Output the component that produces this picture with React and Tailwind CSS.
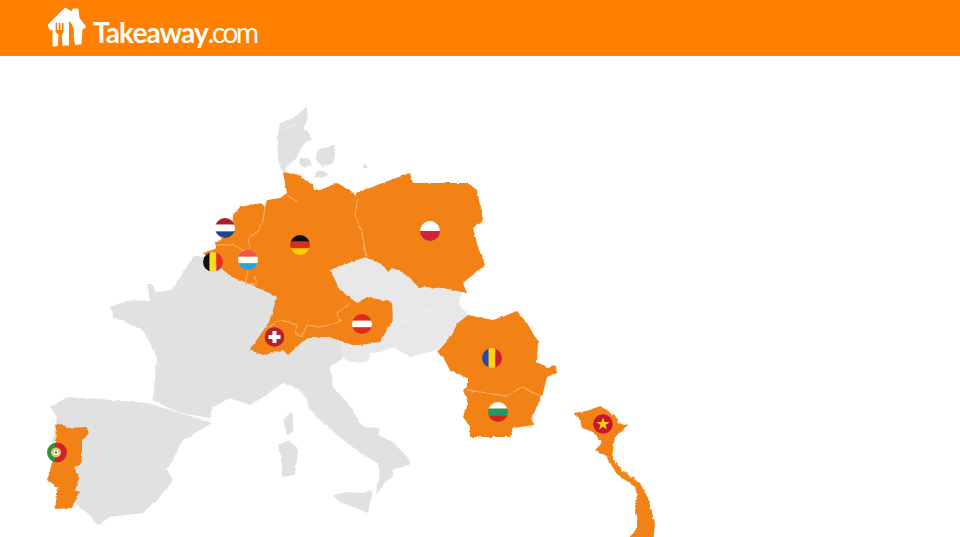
const ORANGE = "#f28118";
const GREY = "#e1e1e1";
const LIGHT = "#e8e8e8";
const LINE = "#f9c48e";

// grey shapes run on under the orange ones so that no seam shows along shared borders
const greyShapes = [
  // denmark
  "307,107 308,120 303,128 310,135 312,139 305,143 300,150 297,158 290,163 283,175 278,160 277,140 280,123 293,118 300,112",
  "300,158 308,158 312,164 305,168 299,164",
  "317,150 325,148 335,145 335,155 333,163 323,167 316,160",
  "315,172 322,170 329,175 322,178 316,177",
  "363,164 368,166 368,169 364,168",
  // france + italy
  "110,307 130,300 150,301 147,284 152,284 156,292 172,290 193,257 203,257 220,255 280,280 300,320 340,320 345,335 347,350 343,358 333,365 330,367 333,387 347,402 363,427 380,428 378,435 393,442 403,452 411,462 409,465 393,470 393,477 385,482 377,494 375,490 380,477 378,463 367,457 353,447 337,435 320,420 310,410 303,392 295,387 283,383 263,397 250,405 230,398 212,407 210,418 180,413 153,400 157,357 143,330 113,317",
  // iberia
  "50,407 67,397 100,399 147,403 180,413 212,423 183,440 167,470 173,480 160,497 143,513 110,517 98,525 87,513 75,503 60,490 50,450 57,417",
  // islands
  "333,495 347,492 363,493 373,490 368,513 353,507 340,502",
  "278,445 290,440 298,450 295,475 282,477 282,460",
  "293,410 293,433 287,435 283,420",
];

const lightShapes = [
  // czechia, slovakia, hungary
  "330,270 345,255 367,250 385,260 402,265 425,280 443,283 463,288 458,303 468,315 448,340 437,350 410,357 393,347 380,335 385,320 385,310 367,305 357,310 335,290",
  // slovenia, croatia
  "338,335 360,335 383,330 393,347 380,352 370,353 368,362 350,362 343,358",
];

const orangeShapes = [
  // nl, be, lu, de, ch, at
  "283,172 300,175 305,180 313,185 314,190 320,190 337,183 350,190 358,198 355,215 362,233 366,257 348,263 330,270 340,290 357,303 367,297 392,302 393,320 387,330 380,342 360,345 353,345 337,340 330,337 312,337 302,342 288,355 283,350 263,355 250,350 249,351 265,328 269,322 277,297 257,287 232,277 223,270 203,253 217,248 215,243 232,233 233,215 240,207 260,203 265,207 267,200 280,198 287,193 285,183",
  // poland
  "356,193 385,182 410,173 413,183 468,183 477,190 483,220 473,228 478,247 485,265 463,283 467,293 443,288 423,287 420,288 402,272 392,268 388,272 383,265 365,257 360,233 353,215 356,198",
  // portugal
  "55,425 63,424 67,428 87,427 89,433 82,440 82,457 80,465 74,467 79,478 75,490 79,492 72,508 55,509 58,487 53,485 47,480 55,453 57,433",
  // romania
  "437,352 448,340 458,323 468,315 493,320 517,311 527,323 538,342 537,362 547,368 556,365 557,373 547,377 542,397 522,387 507,396 467,390 467,378 450,370 443,357",
  // bulgaria
  "463,390 467,387 507,393 522,384 543,394 532,417 534,425 513,428 510,437 470,437 470,427 463,417 468,403",
  // vietnam
  "573,413 580,412 587,411 600,406 615,415 618,423 628,426 615,437 613,450 612,458 623,471 640,483 648,498 655,523 653,545 623,545 638,527 635,512 637,495 635,487 617,474 605,455 595,450 602,443 593,432 582,428 580,420",
];

const borderLines = [
  "358,198 355,215 362,233 366,257",
  "265,207 263,220 258,232 248,238 250,247",
  "217,245 233,245 247,252",
  "287,195 298,202",
  "248,270 245,283 255,285 255,276",
  "265,328 282,320 297,325 295,333 302,337 307,325 320,327 340,322 337,313 350,303",
  "467,390 507,396 522,387 542,397",
];

const paleLines = [
  "397,323 420,315 443,303",
  "150,403 197,418 212,420",
  "157,360 163,373",
  "280,130 296,125",
];

const Flag = ({ id, cx, cy, children }) => (
  <g>
    <clipPath id={id}>
      <circle cx={cx} cy={cy} r="10" />
    </clipPath>
    <g clipPath={`url(#${id})`}>{children}</g>
  </g>
);

const HStripes = ({ cx, cy, colors }) =>
  colors.map((c, i) => (
    <rect key={i} x={cx - 10} y={cy - 10 + (i * 20) / colors.length} width="20" height={20 / colors.length} fill={c} />
  ));

const VStripes = ({ cx, cy, colors }) =>
  colors.map((c, i) => (
    <rect key={i} x={cx - 10 + (i * 20) / colors.length} y={cy - 10} width={20 / colors.length} height="20" fill={c} />
  ));

const MapChart = () => (
  <svg viewBox="0 56 960 481" className="block h-[481px] w-[960px]">
    <filter id="rough" x="0" y="56" width="960" height="481" filterUnits="userSpaceOnUse">
      <feTurbulence type="fractalNoise" baseFrequency="0.2" numOctaves="2" seed="4" />
      <feDisplacementMap in="SourceGraphic" scale="3" xChannelSelector="R" yChannelSelector="G" />
      <feGaussianBlur stdDeviation="0.35" />
    </filter>

    <g filter="url(#rough)">
      {greyShapes.map((p) => (
        <polygon key={p} points={p} fill={GREY} />
      ))}
      {lightShapes.map((p) => (
        <polygon key={p} points={p} fill={LIGHT} />
      ))}
      {orangeShapes.map((p) => (
        <polygon key={p} points={p} fill={ORANGE} />
      ))}
      {borderLines.map((p) => (
        <polyline key={p} points={p} fill="none" stroke={LINE} strokeWidth="0.8" />
      ))}
      {paleLines.map((p) => (
        <polyline key={p} points={p} fill="none" stroke="#f3f3f3" strokeWidth="0.8" />
      ))}
    </g>

    <Flag id="nl" cx={225} cy={228}>
      <HStripes cx={225} cy={228} colors={["#ae1c28", "#ffffff", "#21468b"]} />
    </Flag>
    <Flag id="de" cx={300} cy={245}>
      <HStripes cx={300} cy={245} colors={["#111111", "#dd2c1c", "#ffce00"]} />
    </Flag>
    <Flag id="be" cx={213} cy={262}>
      <VStripes cx={213} cy={262} colors={["#111111", "#fdda24", "#e2302a"]} />
    </Flag>
    <Flag id="lu" cx={248} cy={260}>
      <HStripes cx={248} cy={260} colors={["#f0544c", "#ffffff", "#2aa3dc"]} />
    </Flag>
    <Flag id="pl" cx={430} cy={231}>
      <HStripes cx={430} cy={231} colors={["#ffffff", "#d4213d"]} />
    </Flag>
    <Flag id="at" cx={362} cy={324}>
      <HStripes cx={362} cy={324} colors={["#e02a1c", "#ffffff", "#e02a1c"]} />
    </Flag>
    <Flag id="ch" cx={274.5} cy={337}>
      <circle cx={274.5} cy={337} r="10" fill="#b5222c" />
      <rect x="268.5" y="335" width="12" height="4" fill="#ffffff" />
      <rect x="272.5" y="331" width="4" height="12" fill="#ffffff" />
    </Flag>
    <Flag id="ro" cx={492} cy={358}>
      <VStripes cx={492} cy={358} colors={["#1f4ea8", "#fcd116", "#ce1f3a"]} />
    </Flag>
    <Flag id="bg" cx={498} cy={412}>
      <HStripes cx={498} cy={412} colors={["#ffffff", "#1c9a6c", "#d62612"]} />
    </Flag>
    <Flag id="pt" cx={57} cy={452.5}>
      <rect x="47" y="442.5" width="8" height="20" fill="#2f8f3c" />
      <rect x="55" y="442.5" width="12" height="20" fill="#d21f2e" />
      <circle cx="56" cy="452.5" r="5" fill="#e8c55a" />
      <circle cx="56" cy="452.5" r="2.6" fill="#ffffff" />
      <circle cx="56" cy="452.5" r="1.2" fill="#4a62b5" />
    </Flag>
    <Flag id="vn" cx={603} cy={424}>
      <circle cx={603} cy={424} r="10" fill="#c8162e" />
      <polygon
        points="603,417.5 604.6,422 609.4,422 605.6,424.9 607,429.5 603,426.8 599,429.5 600.4,424.9 596.6,422 601.4,422"
        fill="#fcd116"
      />
    </Flag>
  </svg>
);

// coordinates are page px minus the mark's origin (47,8)
const LogoMark = () => (
  <svg viewBox="0 0 39 40" className="h-[40px] w-[39px] shrink-0">
    <path d="M1 17 L18 0 L25 4 L26 1 L31 1 L32 10 L39 19 L35 21 L34 36 L6 38 L6 21 L3 22 Z" fill="#ffffff" stroke="#ffffff" strokeLinejoin="round" />
    {/* fork */}
    <path d="M8.6 15 H10.2 V22 H11.8 V15 H13.4 V22 H15 V15 H16.6 V24 L14.8 27 L15.6 39 H10.8 L11.6 27 L8.6 24 Z" fill="#ff8000" />
    {/* knife */}
    <path d="M22 13 C26 16 28 23 26.6 28 L28.4 39 H22 Z" fill="#ff8000" />
  </svg>
);

export default function App() {
  return (
    <div className="h-[537px] w-[960px] overflow-hidden bg-white">
      <header className="flex h-[56px] items-start bg-[#ff8000] pl-[47px] pt-[8px]">
        <LogoMark />
        <div className="ml-[7px] mt-[7px] whitespace-nowrap font-['Lato',sans-serif] text-[28px] leading-[34px] text-white">
          <span className="font-bold tracking-[-0.9px]">Takeaway</span>
          <span className="font-normal tracking-[-2.5px]">.com</span>
        </div>
      </header>
      <MapChart />
    </div>
  );
}
